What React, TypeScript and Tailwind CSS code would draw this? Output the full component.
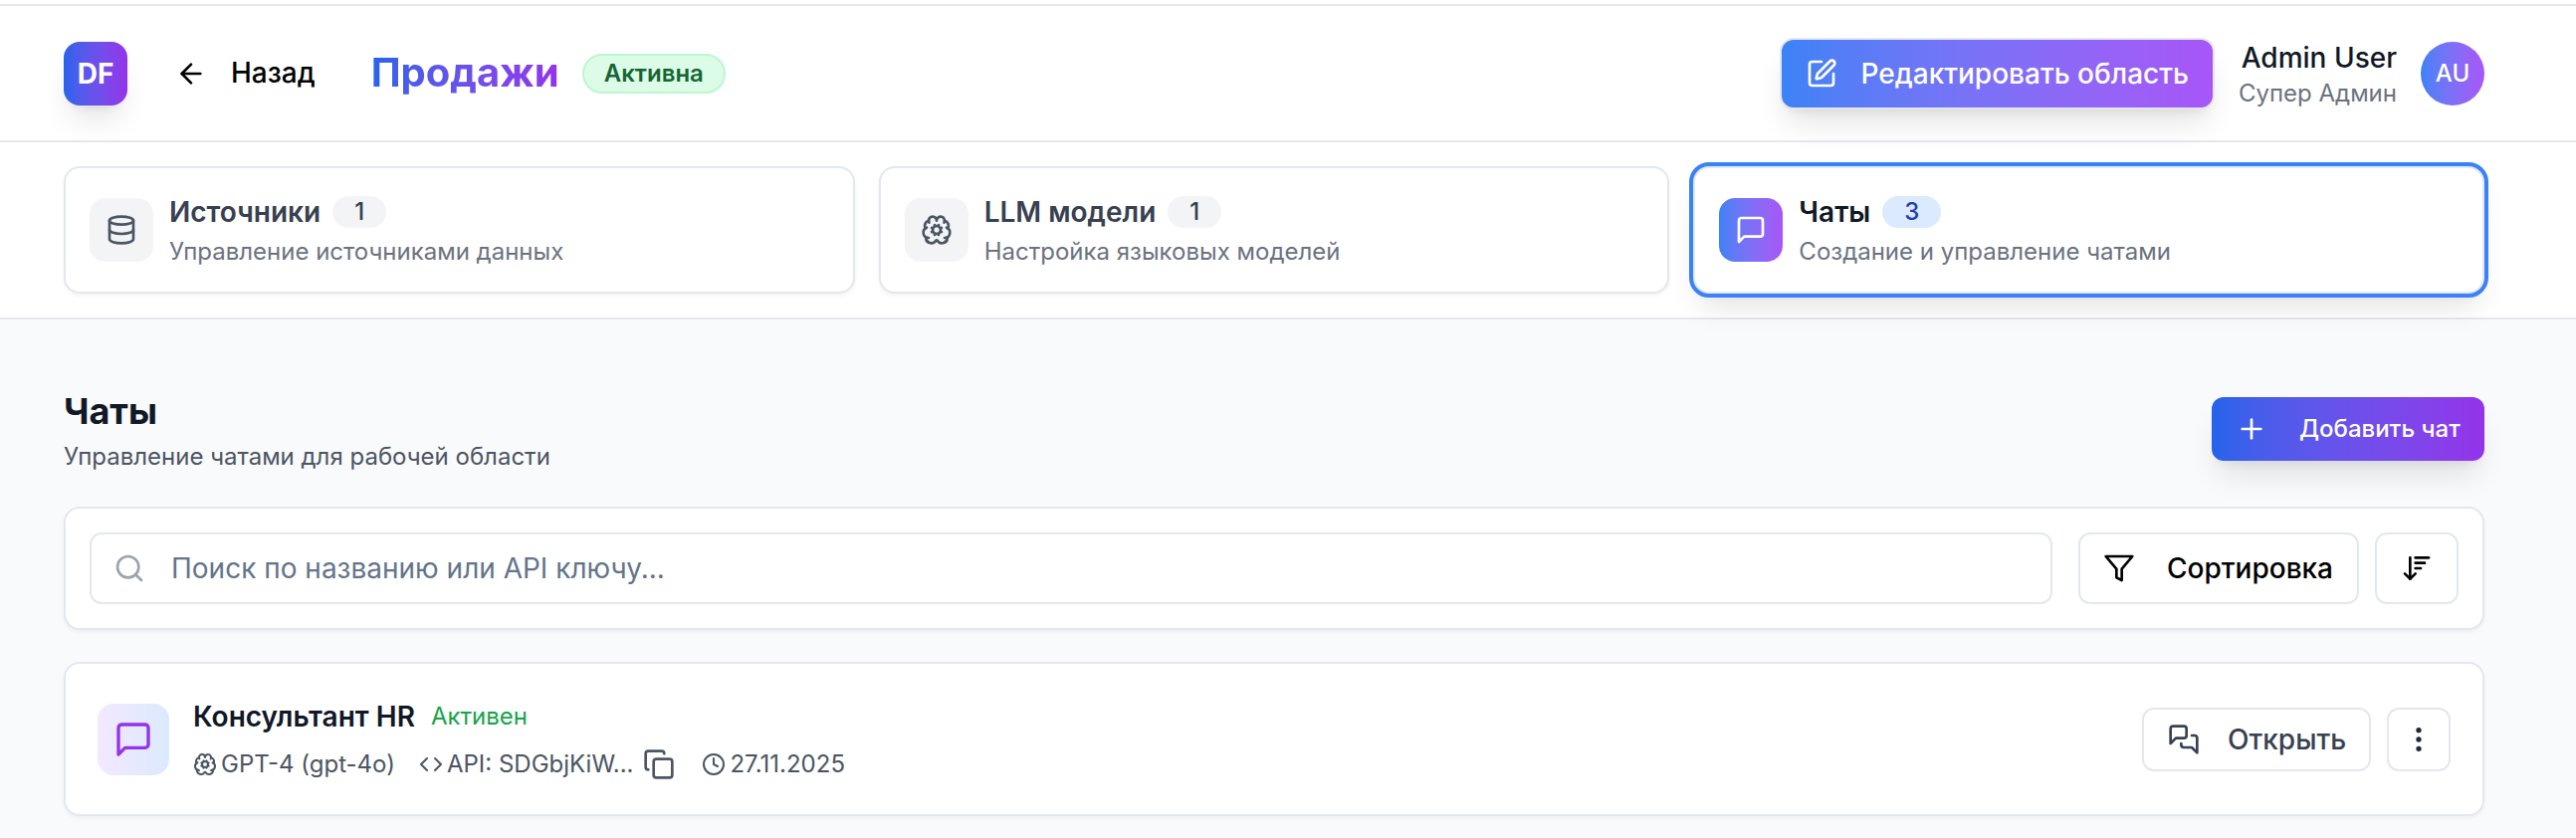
import React from "react";
import { ArrowLeft, BrainCog, Database, SquarePen, Plus, Search, ArrowDownWideNarrow, EllipsisVertical, Clock, Copy } from "lucide-react";

function Bubble({ size }: { size: number }) {
  return (
    <svg width={size} height={size} viewBox="0 0 24 24" fill="none" stroke="currentColor" strokeWidth="2" strokeLinecap="round" strokeLinejoin="round">
      <path d="M21 15a2 2 0 0 1-2 2H7l-4 4V5a2 2 0 0 1 2-2h14a2 2 0 0 1 2 2z" />
    </svg>
  );
}

function Bubbles({ size }: { size: number }) {
  return (
    <svg width={size} height={size} viewBox="0 0 24 24" fill="none" stroke="currentColor" strokeWidth="2" strokeLinecap="round" strokeLinejoin="round">
      <path d="M14 9a2 2 0 0 1-2 2H6l-4 4V4a2 2 0 0 1 2-2h8a2 2 0 0 1 2 2z" />
      <path d="M18 9h2a2 2 0 0 1 2 2v11l-4-4h-6a2 2 0 0 1-2-2v-1" />
    </svg>
  );
}

function Filter({ size }: { size: number }) {
  return (
    <svg width={size} height={size} viewBox="0 0 24 24" fill="none" stroke="currentColor" strokeWidth="2" strokeLinecap="round" strokeLinejoin="round">
      <polygon points="22 3 2 3 10 12.46 10 19 14 21 14 12.46 22 3" />
    </svg>
  );
}

function Chevrons({ size }: { size: number }) {
  return (
    <svg width={size} height={size} viewBox="0 0 24 24" fill="none" stroke="currentColor" strokeWidth="2" strokeLinecap="round" strokeLinejoin="round">
      <polyline points="16 18 22 12 16 6" />
      <polyline points="8 6 2 12 8 18" />
    </svg>
  );
}

function Tab({ icon, title, count, desc, active }: { icon: React.ReactNode; title: string; count: string; desc: string; active?: boolean }) {
  return (
    <div className={`flex-1 flex items-center h-[128px] px-[24px] gap-[16px] bg-white rounded-[16px] border-2 border-[#e2e8f0] ${active ? "outline-[4px] outline-[#3b82f6] shadow-[0_20px_30px_-6px_rgba(0,0,0,0.1),0_8px_12px_-8px_rgba(0,0,0,0.1)]" : "shadow-[0_2px_4px_0_rgba(0,0,0,0.05)]"}`}>
      <div className={`w-[64px] h-[64px] rounded-[16px] flex items-center justify-center ${active ? "bg-gradient-to-r from-[#3b82f6] to-[#a855f7] text-white" : "bg-[#f3f4f6] text-[#4b5563]"}`}>{icon}</div>
      <div className="flex flex-col pt-[3px]">
        <div className="flex items-center gap-[12px] h-[32px]">
          <span className={`text-[28px] font-semibold leading-[32px] ${active ? "text-[#111827]" : "text-[#374151]"}`}>{title}</span>
          <span className={`h-[32px] rounded-full px-[22px] flex items-center text-[24px] font-medium ${active ? "bg-[#dbeafe] text-[#1e40af]" : "bg-[#f3f4f6] text-[#374151]"}`}>{count}</span>
        </div>
        <span className="mt-[8px] text-[24px] leading-[32px] text-[#6b7280]">{desc}</span>
      </div>
    </div>
  );
}

export default function App() {
  return (
    <div className="min-h-[842px] bg-[#f9fafb] font-['Inter',sans-serif] overflow-hidden">
      <div className="h-[6px] bg-white border-b-2 border-[#e5e7eb]" />
      <header className="h-[137px] bg-white border-b-2 border-[#e5e7eb] flex items-center pl-[64px] pr-[92px]">
        <div className="w-[64px] h-[64px] rounded-[16px] bg-gradient-to-r from-[#2563eb] to-[#9333ea] shadow-[0_20px_30px_-6px_rgba(0,0,0,0.1),0_8px_12px_-8px_rgba(0,0,0,0.1)] flex items-center justify-center text-white font-bold text-[28px]">DF</div>
        <div className="ml-[48px] flex items-center gap-[24px] text-black text-[28px] font-medium">
          <ArrowLeft size={32} />
          <span className="-mt-[2px]">Назад</span>
        </div>
        <h1 className="ml-[56px] -mt-[2px] text-[40px] font-bold bg-gradient-to-r from-[#2563eb] to-[#9333ea] bg-clip-text text-transparent">Продажи</h1>
        <span className="ml-[23px] h-[40px] px-[20px] flex items-center rounded-full bg-[#dcfce7] border-2 border-[#bbf7d0] text-[#166534] text-[24px] font-semibold">Активна</span>
        <div className="ml-auto flex items-center">
          <button className="h-[72px] flex items-center gap-[24px] px-[24px] rounded-[14px] border-2 border-[#e5e7eb] bg-gradient-to-r from-[#3b82f6] to-[#a855f7] bg-origin-border text-white text-[28px] font-medium whitespace-nowrap shadow-[0_20px_30px_-6px_rgba(0,0,0,0.1),0_8px_12px_-8px_rgba(0,0,0,0.1)]">
            <SquarePen size={32} />
            <span>Редактировать область</span>
          </button>
          <div className="ml-[24px] flex flex-col items-end">
            <span className="text-[28px] leading-[40px] font-medium text-[#111827]">Admin User</span>
            <span className="text-[24px] leading-[32px] text-[#6b7280]">Супер Админ</span>
          </div>
          <div className="ml-[24px] w-[64px] h-[64px] rounded-full bg-gradient-to-r from-[#3b82f6] to-[#a855f7] flex items-center justify-center text-white text-[24px] font-medium">AU</div>
        </div>
      </header>
      <nav className="h-[178px] bg-white border-b-2 border-[#e5e7eb] flex items-center gap-[24px] pl-[64px] pr-[92px]">
        <Tab icon={<Database size={32} />} title="Источники" count="1" desc="Управление источниками данных" />
        <Tab icon={<BrainCog size={32} />} title="LLM модели" count="1" desc="Настройка языковых моделей" />
        <Tab active icon={<Bubble size={32} />} title="Чаты" count="3" desc="Создание и управление чатами" />
      </nav>
      <main className="pl-[64px] pr-[92px] pt-[72px]">
        <div className="flex items-start justify-between">
          <div>
            <h2 className="text-[36px] leading-[40px] font-bold text-[#111827]">Чаты</h2>
            <p className="mt-[10px] text-[24px] leading-[32px] text-[#4b5563]">Управление чатами для рабочей области</p>
          </div>
          <button className="mt-[6px] h-[64px] w-[274px] flex items-center px-[24px] gap-[32px] rounded-[12px] bg-gradient-to-r from-[#2563eb] to-[#9333ea] text-white text-[24px] font-medium whitespace-nowrap shadow-[0_20px_30px_-6px_rgba(0,0,0,0.1),0_8px_12px_-8px_rgba(0,0,0,0.1)]">
            <Plus size={32} />
            <span>Добавить чат</span>
          </button>
        </div>
        <div className="mt-[34px] h-[124px] bg-white border-2 border-[#e2e8f0] rounded-[16px] shadow-[0_2px_4px_0_rgba(0,0,0,0.05)] flex items-center gap-[26px] px-[24px]">
          <div className="flex-1 h-[72px] border-2 border-[#e2e8f0] rounded-[12px] flex items-center pl-[22px] gap-[26px] text-[#64748b] text-[28px]">
            <Search size={32} className="text-[#9ca3af]" />
            <span>Поиск по названию или API ключу...</span>
          </div>
          <div className="flex items-center gap-[16px]">
            <button className="h-[72px] w-[282px] border-2 border-[#e2e8f0] rounded-[12px] flex items-center pl-[23px] gap-[32px] text-black text-[28px] font-medium">
              <Filter size={32} />
              <span>Сортировка</span>
            </button>
            <button className="h-[72px] w-[84px] border-2 border-[#e2e8f0] rounded-[12px] flex items-center justify-center text-black">
              <ArrowDownWideNarrow size={32} />
            </button>
          </div>
        </div>
        <div className="mt-[32px] h-[155px] bg-white border-2 border-[#e2e8f0] rounded-[16px] shadow-[0_2px_4px_0_rgba(0,0,0,0.05)] flex items-center px-[32px]">
          <div className="w-[72px] h-[72px] rounded-[16px] bg-gradient-to-r from-[#f3e8ff] to-[#dbeafe] flex items-center justify-center text-[#9333ea]">
            <Bubble size={40} />
          </div>
          <div className="ml-[24px] flex flex-col -mt-[2px]">
            <div className="flex items-center gap-[16px] h-[40px]">
              <span className="text-[28px] leading-[40px] font-semibold text-[#111827]">Консультант HR</span>
              <span className="text-[24px] text-[#16a34a]">Активен</span>
            </div>
            <div className="mt-[12px] flex items-center h-[32px] text-[24px] text-[#4b5563]">
              <BrainCog size={24} />
              <span className="ml-[4px]">GPT-4 (gpt-4o)</span>
              <span className="ml-[24px]"><Chevrons size={24} /></span>
              <span className="ml-[4px]">API: SDGbjKiW...</span>
              <Copy size={32} className="ml-[10px]" />
              <Clock size={24} className="ml-[27px]" />
              <span className="ml-[4px]">27.11.2025</span>
            </div>
          </div>
          <div className="ml-auto flex items-center gap-[16px]">
            <button className="h-[64px] w-[230px] border-2 border-[#e5e7eb] rounded-[12px] flex items-center pl-[24px] gap-[28px] text-[#374151] text-[28px] font-medium">
              <Bubbles size={32} />
              <span>Открыть</span>
            </button>
            <button className="h-[64px] w-[64px] border-2 border-[#e5e7eb] rounded-[12px] flex items-center justify-center text-[#1f2937]">
              <EllipsisVertical size={32} />
            </button>
          </div>
        </div>
      </main>
    </div>
  );
}
